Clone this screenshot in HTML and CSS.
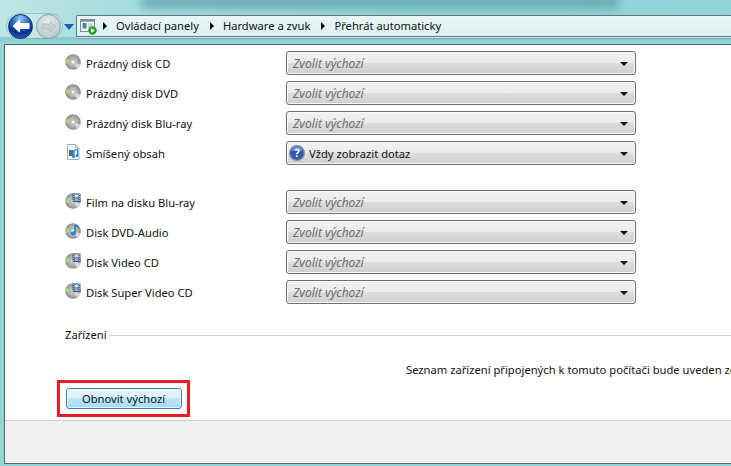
FILE: index.html
```html
<!DOCTYPE html>
<html lang="cs">
<head>
<meta charset="utf-8">
<title>Přehrát automaticky</title>
<link rel="stylesheet" href="styles.css">
</head>
<body>
<svg class="defs" width="0" height="0" aria-hidden="true">
  <defs>
    <radialGradient id="disc" cx="50%" cy="50%" r="55%">
      <stop offset="0" stop-color="#e8e8e8"/><stop offset=".5" stop-color="#b0b0b0"/><stop offset="1" stop-color="#858585"/>
    </radialGradient>
    <symbol id="cd" viewBox="0 0 16 16">
      <circle cx="8" cy="8" r="7.800" fill="url(#disc)"/>
      <path d="M8 8 1 4.500A7.800 7.800 0 0 0 .5 10Z" fill="#a8d08c"/>
      <path d="M8 8 15.500 10.500A7.800 7.800 0 0 1 12 14.700Z" fill="#d8d8d8"/>
      <circle cx="8" cy="8" r="2.100" fill="#fff" stroke="#9a9a9a" stroke-width=".7"/>
    </symbol>
    <symbol id="film" viewBox="0 0 16 16">
      <use href="#cd"/>
      <rect x="7.500" y=".5" width="8" height="8.500" fill="#3f5a78"/>
      <rect x="9.500" y="1.500" width="4" height="3" fill="#cfe2f4"/>
      <rect x="9.500" y="5.300" width="4" height="2.700" fill="#8fb6d8"/>
      <path d="M8.200 1.500h.7M8.200 3.500h.7M8.200 5.500h.7M8.200 7.500h.7M14.100 1.500h.7M14.100 3.500h.7M14.100 5.500h.7M14.100 7.500h.7" stroke="#fff" stroke-width=".8"/>
    </symbol>
    <symbol id="audio" viewBox="0 0 16 16">
      <use href="#cd"/>
      <path d="M10 2.500v7.500" stroke="#1578c8" stroke-width="1.400"/>
      <path d="M10 1.500c2 .5 4 1.500 4.500 3.500-1-1-2.800-1.500-4-1.500Z" fill="#1578c8"/>
      <ellipse cx="8.300" cy="10.300" rx="2.600" ry="2" fill="#1e8ade"/>
    </symbol>
  </defs>
</svg>

<header class="chrome">
  <div class="blur-title"></div>
  <nav class="nav">
    <span class="nav-pill">
      <button class="round back" aria-label="Zpět">
        <svg width="18" height="14" viewBox="0 0 18 14"><path d="M1 7 7.500 1v3.500H17v5H7.500V13Z" fill="#fff" stroke="#fff" stroke-linejoin="round"/></svg>
      </button>
      <button class="round forward" aria-label="Vpřed">
        <svg width="16" height="13" viewBox="0 0 16 13"><path d="M15 6.500 9 1v3H1v5h8v3Z" fill="#c5d2d2" stroke="#aab9b9" stroke-width=".6"/></svg>
      </button>
    </span>
    <span class="nav-drop"></span>
    <div class="address">
      <svg class="cp-icon" width="17" height="17" viewBox="0 0 17 17">
        <rect x=".5" y="1.500" width="14" height="12" fill="#f4f8f6" stroke="#7d8a8a"/>
        <rect x="1" y="2" width="13" height="1.800" fill="#7e98a8"/>
        <rect x="2.500" y="5" width="4" height="5.500" fill="#3f8c8c"/>
        <path d="M8 6h5M8 8h5M8 10h5" stroke="#b0bcbc"/>
        <circle cx="12.500" cy="12.500" r="4.200" fill="#2f9e2f"/>
        <path d="M11 10.300 15 12.500 11 14.700Z" fill="#fff"/>
      </svg>
      <span class="crumb-arrow"></span><span class="crumb">Ovládací panely</span>
      <span class="crumb-arrow"></span><span class="crumb">Hardware a zvuk</span>
      <span class="crumb-arrow"></span><span class="crumb">Přehrát automaticky</span>
    </div>
  </nav>
</header>

<div class="window">
  <main class="content">
    <section class="group">
      <div class="row"><svg class="ico"><use href="#cd"/></svg><span class="label">Prázdný disk CD</span><div class="select"><span class="value muted">Zvolit výchozí</span><i class="caret"></i></div></div>
      <div class="row"><svg class="ico"><use href="#cd"/></svg><span class="label">Prázdný disk DVD</span><div class="select"><span class="value muted">Zvolit výchozí</span><i class="caret"></i></div></div>
      <div class="row"><svg class="ico"><use href="#cd"/></svg><span class="label">Prázdný disk Blu-ray</span><div class="select"><span class="value muted">Zvolit výchozí</span><i class="caret"></i></div></div>
      <div class="row">
        <svg class="ico" viewBox="0 0 16 16">
          <path d="M2.500 .5h8l3.500 3.500v11.500h-11.500Z" fill="#fbfcfd" stroke="#a5adb5"/>
          <path d="M10.500 .5v3.500h3.500" fill="#dfe6ec" stroke="#a5adb5"/>
          <rect x="4" y="6" width="4.500" height="6" fill="#50679a"/>
          <path d="M9 12.500V6.500l3.500-1v6" fill="none" stroke="#1e8ade" stroke-width="1.300"/>
          <circle cx="8.500" cy="12.500" r="1.500" fill="#1e8ade"/><circle cx="12" cy="11.500" r="1.500" fill="#1e8ade"/>
        </svg>
        <span class="label">Smíšený obsah</span>
        <div class="select">
          <svg class="help" width="16" height="16" viewBox="0 0 16 16">
            <circle cx="8" cy="8" r="7.400" fill="#3658b0" stroke="#8a93a8" stroke-width="1.200"/>
            <path d="M3 6a5 4 0 0 1 10 0c-2-1.500-8-1.500-10 0Z" fill="#7f9ee0"/>
            <text x="8" y="12" text-anchor="middle" class="help-q">?</text>
          </svg>
          <span class="value strong">Vždy zobrazit dotaz</span><i class="caret"></i>
        </div>
      </div>
    </section>
    <section class="group media">
      <div class="row"><svg class="ico"><use href="#film"/></svg><span class="label">Film na disku Blu-ray</span><div class="select"><span class="value muted">Zvolit výchozí</span><i class="caret"></i></div></div>
      <div class="row"><svg class="ico"><use href="#audio"/></svg><span class="label">Disk DVD-Audio</span><div class="select"><span class="value muted">Zvolit výchozí</span><i class="caret"></i></div></div>
      <div class="row"><svg class="ico"><use href="#film"/></svg><span class="label">Disk Video CD</span><div class="select"><span class="value muted">Zvolit výchozí</span><i class="caret"></i></div></div>
      <div class="row"><svg class="ico"><use href="#film"/></svg><span class="label">Disk Super Video CD</span><div class="select"><span class="value muted">Zvolit výchozí</span><i class="caret"></i></div></div>
    </section>
    <div class="legend"><span>Zařízení</span><hr class="rule"></div>
    <p class="note">Seznam zařízení připojených k tomuto počítači bude uveden zde.</p>
    <div class="action"><button class="reset">Obnovit výchozí</button></div>
  </main>
  <footer class="foot"></footer>
</div>
</body>
</html>
```
FILE: styles.css
```css
* { box-sizing: border-box; }
html, body { margin: 0; height: 100%; }
body {
  width: 731px; height: 466px; overflow: hidden;
  display: flex; flex-direction: column;
  background: #93d6d8;
  font: 11.2px/16px "Noto Sans", "Open Sans", sans-serif;
  color: #111;
}
.defs { position: absolute; }
.chrome {
  position: relative; height: 44px; flex: none; padding-top: 15px; overflow: hidden;
  background:
    linear-gradient(transparent 36px, #86cbcd 38px, #9ad8da 44px),
    linear-gradient(90deg, #bfe6e6 0, #a8dedf 15%, #93d6d8 60%, #8fd4d6 100%);
}
.blur-title {
  position: absolute; left: 140px; top: -5px; width: 480px; height: 14px;
  background: #5a9ea2; filter: blur(4px); opacity: .7; border-radius: 6px;
}
.nav { position: relative; display: flex; align-items: center; height: 22px; }
.nav-pill {
  display: flex; align-items: center; gap: 3px; margin-left: 7px; padding: 0 1px;
  height: 24px; border-radius: 12px; background: rgba(205, 232, 232, .75);
  box-shadow: 0 0 0 1px rgba(120, 165, 168, .5);
}
.round { display: flex; align-items: center; justify-content: center; padding: 0; border-radius: 50%; flex: none; }
.back {
  width: 25px; height: 25px; border: 1px solid #0a2f6e;
  background: radial-gradient(circle at 50% 15%, #9fc8f0 0, #2a6fd0 35%, #072f90 65%, #2b7de0 100%);
}
.forward {
  width: 25px; height: 25px; border: 1px solid #8ba4a6;
  background: radial-gradient(circle at 50% 30%, #e4eded, #bccccc 75%, #cfdddd);
}
.nav-drop {
  margin: 2px 0 0 2px; width: 0; height: 0;
  border-left: 5px solid transparent; border-right: 5px solid transparent;
  border-top: 6px solid #1c5fb0;
}
.address {
  flex: 1; height: 22px; margin-left: 2px; display: flex; align-items: center;
  background: linear-gradient(#e9f6f6, #dbf1f2);
  border: 1px solid #5d7677; border-right: 0; border-radius: 2px 0 0 2px;
  box-shadow: 0 1px 0 #d9efef, 0 2px 0 #6fa3a5;
  padding-left: 3px;
}
.cp-icon { flex: none; margin-right: 6px; }
.crumb-arrow {
  width: 0; height: 0; margin-right: 9px;
  border-left: 4px solid #111; border-top: 4px solid transparent; border-bottom: 4px solid transparent;
}
.crumb { margin-right: 11px; white-space: nowrap; }
.window {
  flex: 1; margin-left: 4px; margin-bottom: 2px; display: flex; flex-direction: column;
  background: #fff; border-top: 1px solid #4b6b6e; border-left: 1px solid #4b6b6e;
  border-bottom: 1px solid #4b6b6e;
}
.content { flex: 1; padding: 6px 0 0 60px; overflow: hidden; }
.group { display: flex; flex-direction: column; gap: 6px; }
.media { margin-top: 25px; }
.row { display: flex; align-items: center; height: 24px; }
.ico { width: 16px; height: 16px; flex: none; margin-right: 5px; margin-top: -2px; }
.label { width: 200px; flex: none; white-space: nowrap; position: relative; top: 1px; }
.select {
  width: 350px; height: 24px; display: flex; align-items: center; padding: 1px 7px 0 6px;
  border: 1px solid #707070; border-radius: 3px;
  background: linear-gradient(#f2f2f2 0, #ebebeb 48%, #dddddd 50%, #cfcfcf 100%);
  box-shadow: inset 0 0 0 1px #f8f8f8;
}
.value { flex: 1; white-space: nowrap; }
.muted { color: #6d6d6d; font-style: italic; font-size: 12px; }
.strong { color: #111; font-size: 11.2px; }
.help { flex: none; margin: -1px 4px 0 -4px; }
.help-q { font: bold 11px "Noto Sans", sans-serif; fill: #fff; }
.caret {
  width: 0; height: 0; border-left: 4px solid transparent; border-right: 4px solid transparent;
  border-top: 4px solid #111;
}
.legend { display: flex; align-items: center; gap: 2px; margin-top: 23px; }
.legend span { flex: none; }
.rule { flex: 1; margin: 0; border: 0; border-top: 1px solid #cfcfcf; }
.note { margin: 19px 0 0 341px; white-space: nowrap; }
.action {
  width: 133px; height: 37px; margin: 2px 0 0 -8px; display: flex; align-items: center; justify-content: center;
  border: 3px solid #ed1c24;
}
.reset {
  width: 116px; height: 21px; padding: 0;
  font: inherit; color: #111;
  border: 1px solid #3c7fb1; border-radius: 3px;
  background: linear-gradient(#e6f5fd 0, #d8effc 48%, #bee6fd 50%, #a7d9f5 100%);
  box-shadow: inset 0 0 0 1px #e8f6fd;
}
.foot { flex: none; height: 43px; background: #f0f0f0; border-top: 1px solid #cfcfcf; }
```
